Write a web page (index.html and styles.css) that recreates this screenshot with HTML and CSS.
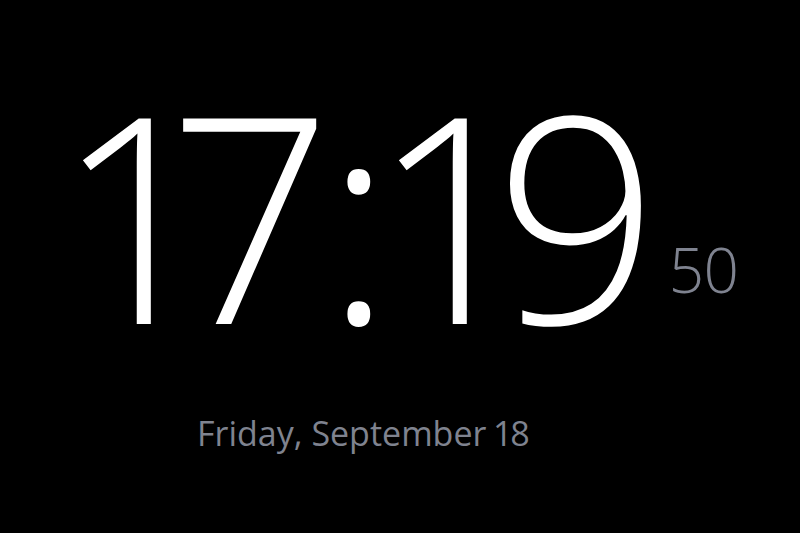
FILE: index.html
```html
<!DOCTYPE html>
<html lang="en">
<head>
<meta charset="utf-8">
<title>Clock</title>
<link rel="stylesheet" href="styles.css">
</head>
<body>
<main class="clock">
  <div class="time-row">
    <div class="time">17<span class="colon">:</span>19</div>
    <div class="seconds">50</div>
  </div>
  <div class="date">Friday, September 18</div>
</main>
</body>
</html>
```
FILE: styles.css
```css
html, body {
  margin: 0;
  padding: 0;
  background: #000;
  width: 800px;
  height: 533px;
  overflow: hidden;
}
.clock {
  display: flex;
  flex-direction: column;
  padding: 0 0 0 76px;
  font-family: "Open Sans", "Noto Sans", sans-serif;
  font-variant-numeric: proportional-nums;
}
.time-row {
  display: flex;
  align-items: flex-end;
  gap: 21px;
  margin-top: 68px;
}
.time {
  color: #fff;
  font-weight: 300;
  font-size: 288px;
  line-height: 288px;
  letter-spacing: -9px;
}
.colon {
  margin: 0 8px 0 10px;
}
.seconds {
  color: #7f8390;
  font-weight: 300;
  font-size: 62px;
  line-height: 62px;
  padding-bottom: 56px;
}
.date {
  color: #7f838f;
  font-size: 34px;
  line-height: 40px;
  margin: 57px 0 0 121px;
}
```
